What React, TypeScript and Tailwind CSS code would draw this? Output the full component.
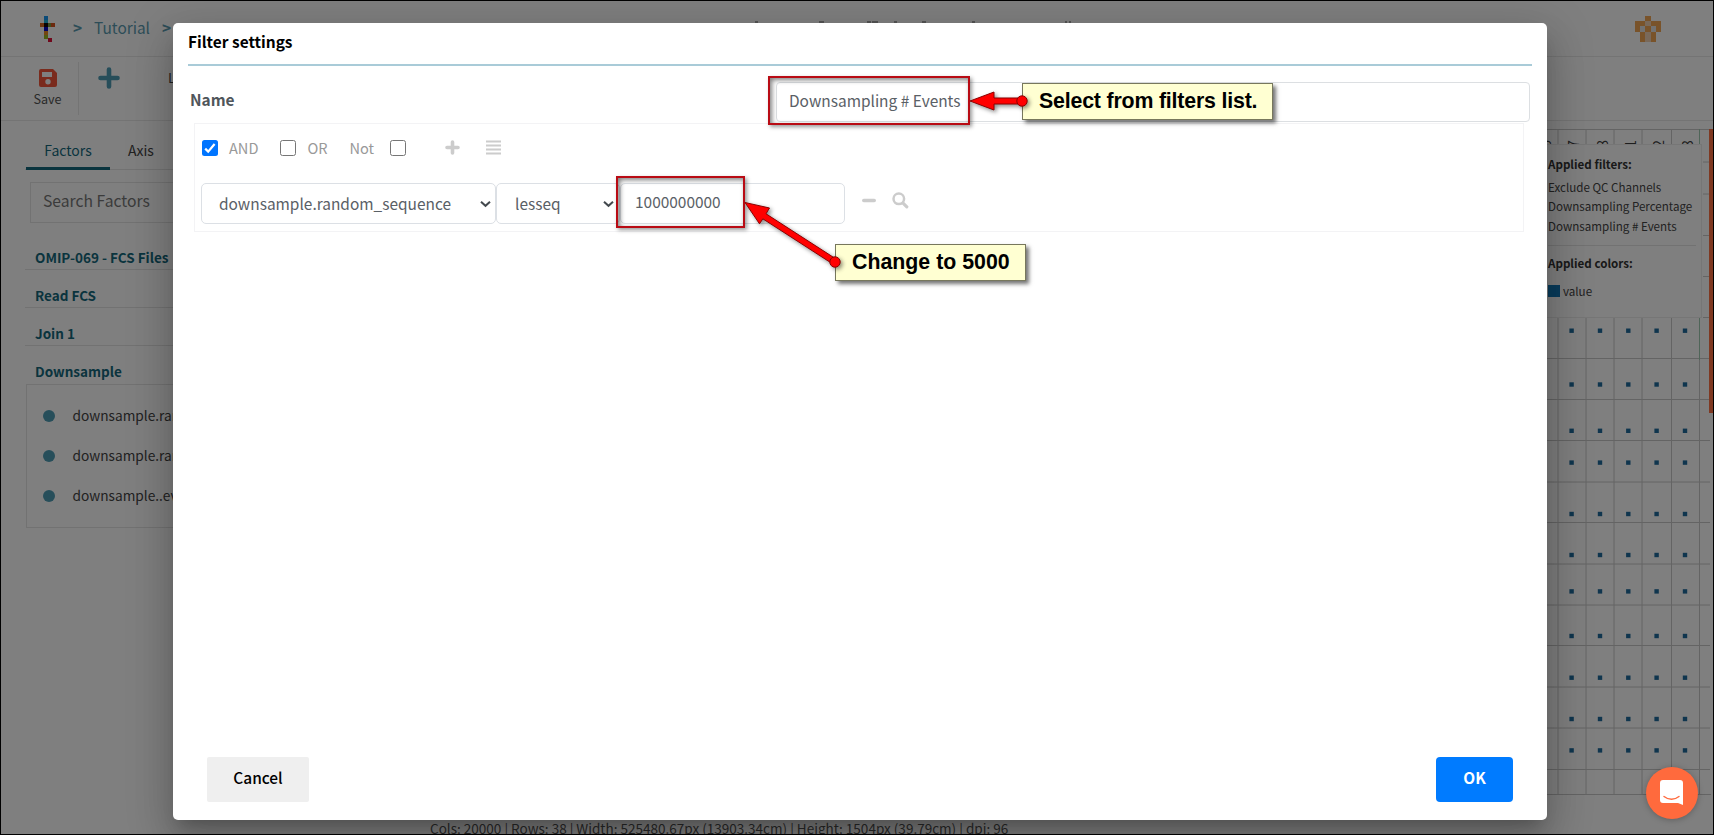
import React from "react";

const LOGO: [number, number, string][] = [
  [1, 0, "#1796f0"], [1, 1, "#20b4d8"],
  [0, 2, "#e06a1c"], [1, 2, "#140808"], [2, 2, "#7c9a3c"], [3, 2, "#d8521c"],
  [1, 3, "#0808c8"], [1, 4, "#e88a20"], [1, 5, "#9cb820"], [2, 6, "#e01038"],
];

const COLUMN_LINES = [1558, 1586, 1614, 1642, 1671.5, 1699.5];
const ROW_LINES = [358.5, 399.5, 440.5, 482, 522.5, 564, 605, 645.5, 687, 728, 769.5];
const DOT_X = [1571.6, 1600, 1628.3, 1656.6, 1685];
const DOT_Y = [330.7, 384.5, 430.8, 462.6, 514, 555, 591.4, 636, 677.7, 719, 750.4];
const TICKS = [162, 194, 235.5, 276.5, 317.5];
const LABELS = ["6", "7", "8", "1", "2", "3"];

function Logo() {
  return (
    <svg width="16" height="27" viewBox="0 0 16 27" shapeRendering="crispEdges">
      {LOGO.map(([x, y, c], i) => (
        <rect key={i} x={x * 3.8} y={y * 3.7} width="4" height="4" fill={c} />
      ))}
    </svg>
  );
}

function Avatar() {
  return (
    <svg width="26" height="26" viewBox="0 0 26 26" shapeRendering="crispEdges">
      <path fill="#f2a654" d="M10 0h6v5h-6zM0 5h10v5H5v6H0zM16 5h10v11h-5v-6h-5zM10 10h6v6h-6zM5 16h5v10H5zM16 16h5v10h-5z" />
      <path fill="#f3d2b4" d="M10 5h6v5h-6zM10 16h6v10h-6z" />
      <path fill="#e4e4e4" d="M5 10h5v6H5zM16 10h5v6h-5z" />
    </svg>
  );
}

function Chart() {
  return (
    <svg className="absolute left-[1500px] top-[128px]" width="214" height="670" viewBox="1500 128 214 670">
      <g stroke="#c8c8c8" strokeWidth="1">
        <path d="M1500 129.500H1709M1500 794.500H1711" />
        {COLUMN_LINES.map((x) => (
          <path key={x} d={`M${x} 129V794`} />
        ))}
        {ROW_LINES.map((y) => (
          <path key={y} d={`M1500 ${y}H1710`} />
        ))}
        {TICKS.map((y) => (
          <path key={y} d={`M1703 ${y}H1710`} />
        ))}
      </g>
      <path d="M1699.500 129V360" stroke="#9ecbb0" />
      {LABELS.map((t, i) => (
        <text
          key={i}
          transform={`translate(${1551 + i * 28.3} 148) rotate(-90)`}
          fill="#3c3c3c"
          fontSize="14.300"
          fontFamily="Noto Sans CJK SC, sans-serif"
        >
          {t}
        </text>
      ))}
      {DOT_Y.map((y) =>
        DOT_X.map((x) => (
          <rect key={`${x}-${y}`} x={x - 2.2} y={y - 2.2} width="4.400" height="4.400" fill="#1f6a9c" />
        )),
      )}
      <rect x="1709" y="129" width="4" height="284" fill="#ff7043" />
    </svg>
  );
}

function Legend() {
  return (
    <div className="absolute left-[1540px] top-[144px] h-[174px] w-[162px] border border-[#ececec] bg-white pl-[7px] text-[11.6px] text-[#444]">
      <div className="mt-[9px] h-[23.5px] text-[11.6px] font-bold leading-[20px] text-[#333]">Applied filters:</div>
      <div className="h-[19.5px] leading-[18px]">Exclude QC Channels</div>
      <div className="h-[19.5px] leading-[18px]">Downsampling Percentage</div>
      <div className="h-[19.5px] leading-[18px]">Downsampling # Events</div>
      <div className="mr-[5px] mt-[8.5px] border-t border-[#e4e4e4]" />
      <div className="mt-[7px] text-[11.6px] font-bold leading-[21px] text-[#333]">Applied colors:</div>
      <div className="mt-[8px] flex items-center leading-[18px]">
        <span className="mr-[3px] h-[12px] w-[12px] bg-[#1379b8]" />
        value
      </div>
    </div>
  );
}

function Workspace() {
  return (
    <div className="flex h-full flex-col">
      <header className="flex h-[57px] shrink-0 items-start border-b border-[#e8e8e8] pl-[40px] text-[15.4px] leading-[42px] text-[#5a9bb0]">
        <div className="mt-[16px]"><Logo /></div>
        <span className="ml-[17px] mt-[6px] font-bold">&gt;</span>
        <span className="ml-[12px] mt-[6px]">Tutorial</span>
        <span className="ml-[12px] mt-[6px] font-bold">&gt;</span>
        <svg className="ml-[580px] mt-[21px]" width="320" height="2" viewBox="750 0 320 2">
          <path stroke="#a8a8a8" strokeWidth="2" d="M754 1h3M818 1h5M866 1h4M871 1h6M893 1h3M921 1h4M971 1h3M1064 1h2M1068 1h2" />
        </svg>
        <div className="ml-auto mr-[53px] mt-[16px]"><Avatar /></div>
      </header>
      <div className="flex h-[64px] shrink-0 border-b border-[#e8e8e8]">
        <div className="my-[5px] ml-[24px] flex w-[55px] flex-col items-center border-r border-[#e8e8e8] pr-[7px] text-[12.6px] text-[#555]">
          <svg className="mt-[7px]" width="18" height="18" viewBox="0 0 18 18">
            <path fill="#f4573b" fillRule="evenodd" d="M2 0h12l4 4v12a2 2 0 0 1-2 2H2a2 2 0 0 1-2-2V2a2 2 0 0 1 2-2zM3 3v5h10V3zM9 10a2.700 2.700 0 1 0 0 5.400A2.700 2.700 0 0 0 9 10z" />
          </svg>
          <span className="mt-[2px] leading-[20px]">Save</span>
        </div>
        <svg className="ml-[19px] mt-[10px]" width="22" height="22" viewBox="0 0 22 22">
          <path stroke="#4f9cb5" strokeWidth="4.600" strokeLinecap="round" d="M11 2.500v17M2.500 11h17" />
        </svg>
        <span className="ml-[48px] mt-[10px] text-[13.5px] leading-[20px] text-[#444]">Layers</span>
      </div>
      <div className="flex w-[380px] flex-col pl-[25px]">
        <nav className="mt-[12px] flex h-[37px] border-b border-[#e4e4e4] text-[14px] leading-[34px]">
          <span className="ml-px h-[37px] w-[84px] border-b-[3px] border-[#14687d] text-center text-[#14687d]">Factors</span>
          <span className="ml-[18px] text-[#444]">Axis</span>
        </nav>
        <div className="ml-[5px] mt-[12px] h-[41px] border border-[#e4e4e4] pl-[12px] text-[15.7px] leading-[35px] text-[#777]">Search Factors</div>
        <div className="mt-[22px] text-[13.5px] text-[#14687d]">
          <div className="h-[25px] border-b border-[#e4e4e4] pl-[10px] font-bold leading-[24px]">OMIP-069 - FCS Files</div>
          <div className="h-[38px] border-b border-[#e4e4e4] pl-[10px] pt-[13px] font-bold leading-[25px]">Read FCS</div>
          <div className="h-[38px] border-b border-[#e4e4e4] pl-[10px] pt-[13px] font-bold leading-[25px]">Join 1</div>
          <div className="h-[38px] pl-[10px] pt-[13px] font-bold leading-[25px]">Downsample</div>
        </div>
        <ul className="ml-px flex h-[144px] flex-col border border-[#e4e4e4] pt-[11px] text-[13.7px] text-[#444]">
          {["downsample.random_sequence", "downsample.random_percentage", "downsample..event_id"].map((t) => (
            <li key={t} className="flex h-[40px] shrink-0 items-center pl-[16px] leading-[36px]">
              <span className="mr-[17.5px] h-[12px] w-[12px] rounded-full bg-[#4f9cb5]" />
              <span className="pb-[2px]">{t}</span>
            </li>
          ))}
        </ul>
      </div>
      <footer className="mt-auto h-[22px] pl-[430px] text-[13.54px] leading-[30px] text-[#555]">
        Cols: 20000 | Rows: 38 | Width: 525480.67px (13903.34cm) | Height: 1504px (39.79cm) | dpi: 96
      </footer>
    </div>
  );
}

function Check({ on }: { on?: boolean }) {
  return on ? (
    <span className="flex h-4 w-4 items-center justify-center rounded-[2.5px] bg-[#0075ff]">
      <svg width="16" height="16" viewBox="0 0 16 16" fill="none" stroke="#fff" strokeWidth="2.200">
        <path d="M3.200 8.600l3 3L12.600 4" />
      </svg>
    </span>
  ) : (
    <span className="h-4 w-4 rounded-[2.5px] border border-[#767676] bg-white" />
  );
}

function Chevron() {
  return (
    <svg width="11" height="8" viewBox="0 0 11 8" fill="none" stroke="#43494e" strokeWidth="2">
      <path d="M1 1.800l4.500 4 4.500-4" />
    </svg>
  );
}

function Dialog() {
  return (
    <section className="absolute left-[173px] top-[23px] flex h-[797px] w-[1374px] flex-col rounded-[5px] bg-white px-[15px] text-[15.45px] text-[#5a6066] shadow-[0_11px_15px_-7px_rgba(0,0,0,0.2),0_24px_38px_3px_rgba(0,0,0,0.14),0_9px_46px_8px_rgba(0,0,0,0.12)]">
      <h2 className="h-[43px] border-b-2 border-[#a9cbd8] font-bold leading-[36px] text-black">Filter settings</h2>
      <div className="mt-4 flex h-10">
        <label className="pl-[2px] font-bold leading-[35px] text-[#50565b]">Name</label>
        <div className="ml-auto mr-[2px] h-10 w-[754px] rounded-[4px] border border-[#dcdfe2] pl-[12px] leading-[34px]">Downsampling # Events</div>
      </div>
      <div className="ml-[6px] mt-px h-[109px] w-[1330px] border border-[#f3f3f5]">
        <div className="flex h-[47px] items-center pl-[6.5px] text-[14.6px] text-[#999]">
          <Check on />
          <span className="ml-[11.5px] w-[51px]">AND</span>
          <Check />
          <span className="ml-[11.5px] w-[42px]">OR</span>
          <span className="w-[40px]">Not</span>
          <Check />
          <svg className="ml-[39px]" width="15" height="15" viewBox="0 0 15 15">
            <path stroke="#ccc" strokeWidth="3.600" strokeLinecap="round" d="M7.500 2v11M2 7.500h11" />
          </svg>
          <svg className="ml-[26px]" width="15" height="15" viewBox="0 0 15 15">
            <path stroke="#ccc" strokeWidth="1.800" d="M0 1.500h15M0 5.500h15M0 9.500h15M0 13.500h15" />
          </svg>
        </div>
        <div className="mt-[12px] flex h-[41px] pl-[6px] leading-[34px]">
          <div className="flex w-[295px] items-center justify-between rounded-[5px] border border-[#dce0e5] pl-[17px] pr-[4px]">
            <span className="leading-[39px]">downsample.random_sequence</span>
            <Chevron />
          </div>
          <div className="flex w-[124px] items-center justify-between rounded-[5px] border border-[#dce0e5] pl-[18px] pr-[5px]">
            <span className="leading-[39px]">lesseq</span>
            <Chevron />
          </div>
          <div className="w-[225px] rounded-[5px] border border-[#dce0e5] pl-[14px]">1000000000</div>
          <svg className="ml-[17px] mt-[15px]" width="14" height="5" viewBox="0 0 14 5">
            <path stroke="#ccc" strokeWidth="3.600" strokeLinecap="round" d="M1.800 2.500h10.400" />
          </svg>
          <svg className="ml-[16px] mt-[9px]" width="17" height="17" viewBox="0 0 17 17" fill="none" stroke="#ccc">
            <circle cx="6.800" cy="6.800" r="5.300" strokeWidth="2.500" />
            <path strokeWidth="3.200" strokeLinecap="round" d="M11.300 11.300l3.500 3.500" />
          </svg>
        </div>
      </div>
      <div className="mb-[18px] mt-auto flex justify-between pl-[19px] pr-[19px]">
        <button className="h-[45px] w-[102px] rounded-[2px] bg-[#efefef] pb-[4px] font-medium text-black">Cancel</button>
        <button className="h-[45px] w-[77px] rounded-[4px] bg-[#007bff] pb-[4px] font-bold text-white">OK</button>
      </div>
    </section>
  );
}

function Annotations() {
  return (
    <>
      <div className="absolute left-[768px] top-[76px] h-[49px] w-[202px] border-2 border-[#b90b14] shadow-[2px_2px_4px_rgba(0,0,0,0.4),inset_2px_2px_5px_rgba(0,0,0,0.5)]" />
      <div className="absolute left-[616px] top-[176px] h-[52px] w-[129px] border-2 border-[#b90b14] shadow-[2px_2px_4px_rgba(0,0,0,0.4),inset_2px_2px_5px_rgba(0,0,0,0.5)]" />
      <div className="absolute left-[1022px] top-[83px] h-[37px] w-[251px] border border-[#77775c] bg-[#ffffd2] pl-[16px] font-['Liberation_Sans',sans-serif] text-[21.33px] font-bold leading-[35px] tracking-[-0.18px] text-black shadow-[3px_3px_4px_rgba(0,0,0,0.55)]">
        Select from filters list.
      </div>
      <div className="absolute left-[835px] top-[244px] h-[37px] w-[191px] border border-[#77775c] bg-[#ffffd2] pl-[16px] font-['Liberation_Sans',sans-serif] text-[21.33px] font-bold leading-[35px] text-black shadow-[3px_3px_4px_rgba(0,0,0,0.55)]">
        Change to 5000
      </div>
      <svg className="absolute left-[730px] top-[80px] drop-shadow-[2px_2px_2px_rgba(0,0,0,0.45)]" width="310" height="200" viewBox="730 80 310 200">
        <g fill="#ff0000" stroke="#8c0000" strokeWidth="1">
          <path d="M970 101l24-9v6h28v6h-28v6z" />
          <circle cx="1022" cy="101" r="5.200" />
          <path d="M745 202.500l24.500 5.500-3.500 5.800 70.500 45.500-3.200 5-70.500-45.500-3.300 5z" />
          <circle cx="835" cy="262" r="5.200" />
        </g>
      </svg>
    </>
  );
}

export default function App() {
  return (
    <div className="relative h-[835px] w-[1714px] overflow-hidden whitespace-nowrap bg-white font-['Noto_Sans_CJK_SC',sans-serif]">
      <Workspace />
      <Chart />
      <Legend />
      <div className="absolute inset-0 bg-black/50" />
      <Dialog />
      <Annotations />
      <div className="absolute left-[1646px] top-[767px] flex h-[52px] w-[52px] items-center justify-center rounded-full bg-[#ff6a3d] shadow-[0_1px_6px_rgba(0,0,0,0.25)]">
        <svg width="24" height="26" viewBox="0 0 24 26">
          <path fill="#fff" d="M3 0h17a3 3 0 0 1 3 3v22l-5-2H3a3 3 0 0 1-3-3V3a3 3 0 0 1 3-3z" />
          <path fill="none" stroke="#ff6a3d" strokeWidth="1.400" strokeLinecap="round" d="M4 16.500c4.500 3.600 10.500 3.600 15 0" />
        </svg>
      </div>
      <div className="pointer-events-none absolute inset-0 border border-black" />
    </div>
  );
}
